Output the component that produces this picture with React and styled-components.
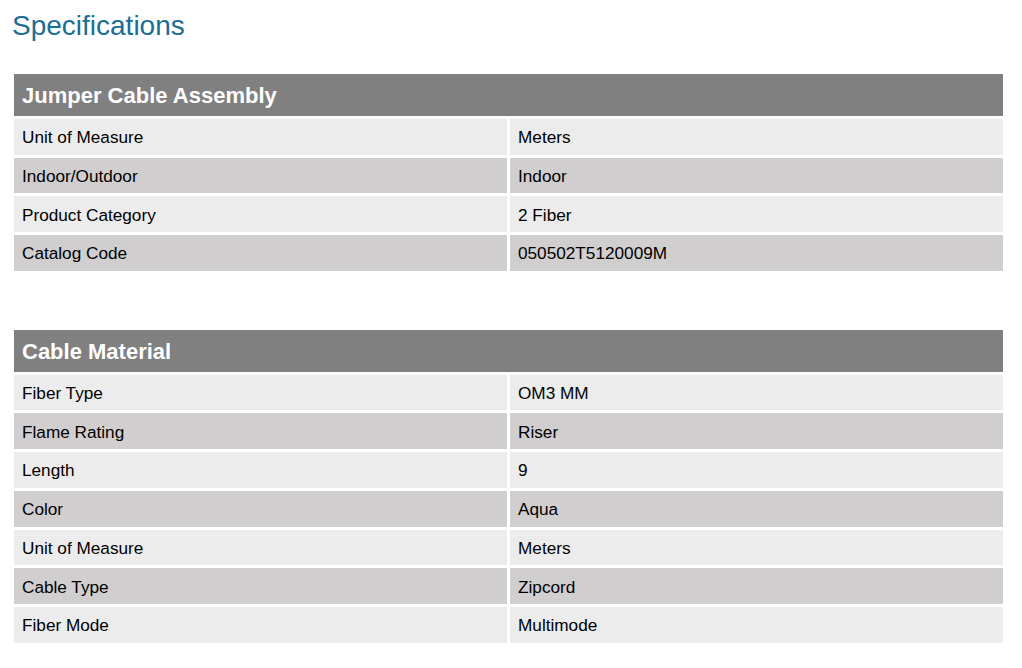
import React from "react";
import styled, { createGlobalStyle } from "styled-components";

const GlobalStyle = createGlobalStyle`
  body {
    margin: 0;
    background: #fff;
    font-family: "Liberation Sans", Arial, sans-serif;
  }
`;

const sections = [
  {
    title: "Jumper Cable Assembly",
    rows: [
      ["Unit of Measure", "Meters"],
      ["Indoor/Outdoor", "Indoor"],
      ["Product Category", "2 Fiber"],
      ["Catalog Code", "050502T5120009M"],
    ],
  },
  {
    title: "Cable Material",
    rows: [
      ["Fiber Type", "OM3 MM"],
      ["Flame Rating", "Riser"],
      ["Length", "9"],
      ["Color", "Aqua"],
      ["Unit of Measure", "Meters"],
      ["Cable Type", "Zipcord"],
      ["Fiber Mode", "Multimode"],
    ],
  },
];

const App = () => {
  return (
    <>
      <GlobalStyle />
      <Page>
        <Title>Specifications</Title>
        <Sections>
          {sections.map((s) => (
            <SpecTable key={s.title}>
              <Header>{s.title}</Header>
              {s.rows.map(([label, value], i) => (
                <Row key={label + i} $dark={i % 2 === 1}>
                  <Cell>{label}</Cell>
                  <Cell>{value}</Cell>
                </Row>
              ))}
            </SpecTable>
          ))}
        </Sections>
      </Page>
    </>
  );
};

const Page = styled.div`
  padding: 10px 19px 0 12px;
`;

const Title = styled.h1`
  margin: 0;
  font-size: 28px;
  line-height: 32px;
  font-weight: 400;
  color: #1a6d94;
`;

const Sections = styled.div`
  display: flex;
  flex-direction: column;
  gap: 59px;
  margin: 32px 0 0 2px;
`;

const SpecTable = styled.div`
  display: flex;
  flex-direction: column;
  gap: 3px;
`;

const Header = styled.div`
  height: 42px;
  display: flex;
  align-items: center;
  padding: 2px 8px 0;
  box-sizing: border-box;
  background: #808080;
  color: #fff;
  font-size: 22px;
  font-weight: 700;
`;

const Row = styled.div`
  display: grid;
  grid-template-columns: 1fr 1fr;
  column-gap: 3px;
  height: 35.7px;
  & > div {
    background: ${(p) => (p.$dark ? "#d0cece" : "#ececec")};
  }
`;

const Cell = styled.div`
  display: flex;
  align-items: center;
  padding: 2px 8px 0;
  font-size: 17.2px;
  color: #000;
`;

export default App;
